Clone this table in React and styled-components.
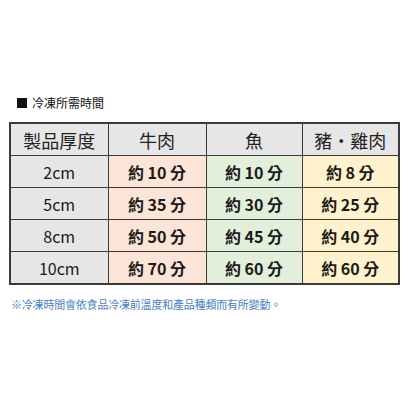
import React from "react";
import styled, { createGlobalStyle } from "styled-components";

const GlobalStyle = createGlobalStyle`
  body {
    margin: 0;
    background: #fff;
    font-family: "Noto Sans CJK TC", "Noto Sans", sans-serif;
  }
`;

const Page = styled.div`
  width: 410px;
  height: 410px;
  padding: 95px 0 0 9px;
  box-sizing: border-box;
`;

const Title = styled.div`
  display: flex;
  align-items: center;
  gap: 5px;
  margin-left: 8px;
  font-size: 12px;
  line-height: 16px;
  color: #111;
  height: 16px;
`;

const Square = styled.span`
  width: 10px;
  height: 10px;
  background: #111;
`;

const Table = styled.table`
  margin-top: 11px;
  border-collapse: collapse;
  border: 2px solid #3a3a3a;
  table-layout: fixed;
  width: 389px;
`;

const Th = styled.th`
  height: 31px;
  padding: 0;
  border: 1px solid #3a3a3a;
  background: #e7e6e6;
  font-weight: 400;
  font-size: 18px;
  color: #222;
  text-align: center;
`;

const Td = styled.td`
  height: 31px;
  padding: 0;
  border: 1px solid #3a3a3a;
  background: ${(p) => p.bg};
  font-size: 16px;
  font-weight: ${(p) => (p.bold ? 700 : 400)};
  color: #1a1a1a;
  text-align: center;
`;

const Note = styled.div`
  margin: 11px 0 0 2px;
  font-size: 11px;
  color: #4a7ec4;
  letter-spacing: -0.2px;
`;

const rows = [
  ["2cm", "約 10 分", "約 10 分", "約 8 分"],
  ["5cm", "約 35 分", "約 30 分", "約 25 分"],
  ["8cm", "約 50 分", "約 45 分", "約 40 分"],
  ["10cm", "約 70 分", "約 60 分", "約 60 分"],
];

const colours = ["#e7e6e6", "#fce4d6", "#e2efda", "#fff2cc"];

export default function App() {
  return (
    <Page>
      <GlobalStyle />
      <Title>
        <Square />
        冷凍所需時間
      </Title>
      <Table>
        <colgroup>
          <col style={{ width: 98 }} />
          <col style={{ width: 98 }} />
          <col style={{ width: 96 }} />
          <col style={{ width: 97 }} />
        </colgroup>
        <thead>
          <tr>
            <Th>製品厚度</Th>
            <Th>牛肉</Th>
            <Th>魚</Th>
            <Th>豬・雞肉</Th>
          </tr>
        </thead>
        <tbody>
          {rows.map((r) => (
            <tr key={r[0]}>
              {r.map((c, i) => (
                <Td key={i} bg={colours[i]} bold={i > 0}>
                  {c}
                </Td>
              ))}
            </tr>
          ))}
        </tbody>
      </Table>
      <Note>※冷凍時間會依食品冷凍前溫度和產品種類而有所變動。</Note>
    </Page>
  );
}
